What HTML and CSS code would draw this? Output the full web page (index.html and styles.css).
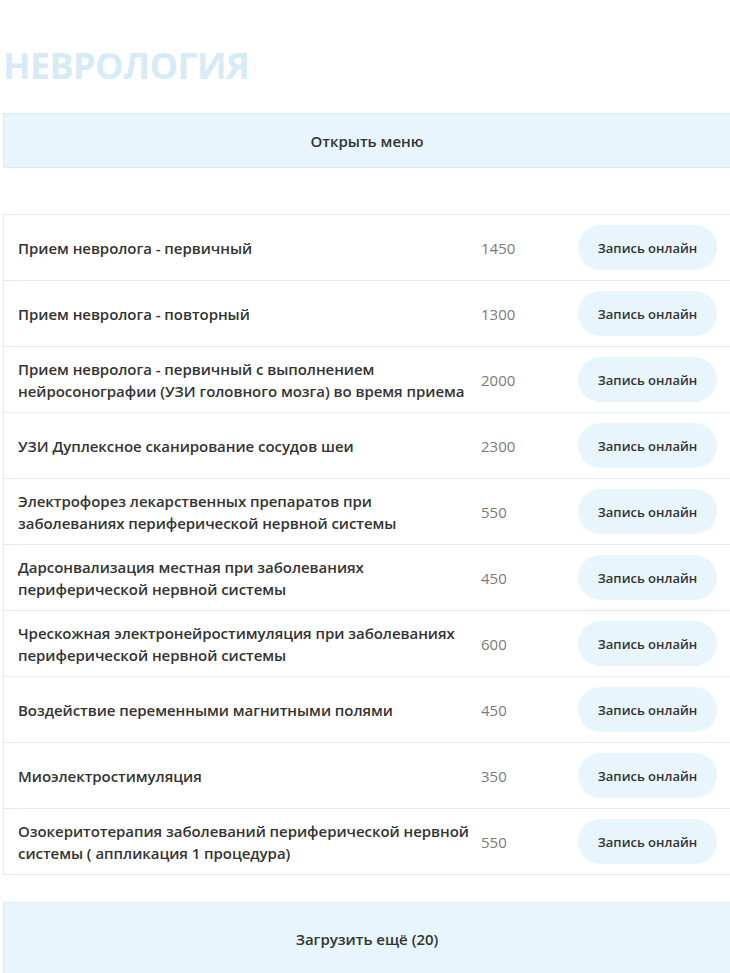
FILE: index.html
```html
<!DOCTYPE html>
<html lang="ru">
<head>
<meta charset="utf-8">
<link rel="stylesheet" href="styles.css">
</head>
<body>
<div class="page">
  <h1 class="title">НЕВРОЛОГИЯ</h1>
  <div class="menu-btn">Открыть меню</div>
  <div class="table">
    <div class="row"><div class="name">Прием невролога - первичный</div><div class="price">1450</div><div class="cell-btn"><span class="btn">Запись онлайн</span></div></div>
    <div class="row"><div class="name">Прием невролога - повторный</div><div class="price">1300</div><div class="cell-btn"><span class="btn">Запись онлайн</span></div></div>
    <div class="row"><div class="name">Прием невролога - первичный с выполнением нейросонографии (УЗИ головного мозга) во время приема</div><div class="price">2000</div><div class="cell-btn"><span class="btn">Запись онлайн</span></div></div>
    <div class="row"><div class="name">УЗИ Дуплексное сканирование сосудов шеи</div><div class="price">2300</div><div class="cell-btn"><span class="btn">Запись онлайн</span></div></div>
    <div class="row"><div class="name">Электрофорез лекарственных препаратов при заболеваниях периферической нервной системы</div><div class="price">550</div><div class="cell-btn"><span class="btn">Запись онлайн</span></div></div>
    <div class="row"><div class="name">Дарсонвализация местная при заболеваниях периферической нервной системы</div><div class="price">450</div><div class="cell-btn"><span class="btn">Запись онлайн</span></div></div>
    <div class="row"><div class="name">Чрескожная электронейростимуляция при заболеваниях периферической нервной системы</div><div class="price">600</div><div class="cell-btn"><span class="btn">Запись онлайн</span></div></div>
    <div class="row"><div class="name">Воздействие переменными магнитными полями</div><div class="price">450</div><div class="cell-btn"><span class="btn">Запись онлайн</span></div></div>
    <div class="row"><div class="name">Миоэлектростимуляция</div><div class="price">350</div><div class="cell-btn"><span class="btn">Запись онлайн</span></div></div>
    <div class="row"><div class="name">Озокеритотерапия заболеваний периферической нервной системы ( аппликация 1 процедура)</div><div class="price">550</div><div class="cell-btn"><span class="btn">Запись онлайн</span></div></div>
  </div>
  <div class="more-btn">Загрузить ещё (20)</div>
</div>
</body>
</html>
```
FILE: styles.css
```css
html, body {
  margin: 0;
  padding: 0;
  background: #fff;
  overflow: hidden;
}
body {
  font-family: "Open Sans", "Liberation Sans", sans-serif;
  color: #333;
}
.page {
  width: 728px;
  margin-left: 3px;
  padding-top: 1px;
}
.title {
  margin: 39px 0 0 0;
  font-size: 36px;
  line-height: 52px;
  font-weight: 700;
  color: #d6ebf6;
  letter-spacing: -0.6px;
}
.menu-btn {
  margin-top: 21px;
  height: 53px;
  border: 1px solid #dcecf4;
  background: #e8f5fc;
  display: flex;
  align-items: center;
  justify-content: center;
  font-size: 15px;
  font-weight: 600;
  color: #333;
}
.table {
  margin-top: 46px;
  border: 1px solid #deedf4;
  border-bottom: none;
}
.row {
  display: grid;
  grid-template-columns: 463px 97px 139px;
  align-items: center;
  height: 65px;
  padding-left: 14px;
  border-bottom: 1px solid #deedf4;
}
.name {
  font-size: 15px;
  line-height: 22px;
  font-weight: 600;
  color: #333;
  padding-right: 8px;
  letter-spacing: -0.05px;
}
.price {
  font-size: 15px;
  color: #7a7a7a;
}
.btn {
  display: flex;
  align-items: center;
  justify-content: center;
  height: 45px;
  border-radius: 23px;
  background: #e8f5fc;
  font-size: 13px;
  font-weight: 600;
  color: #333;
}
.more-btn {
  margin-top: 27px;
  height: 72px;
  border: 1px solid #dcecf4;
  background: #e8f5fc;
  display: flex;
  align-items: center;
  justify-content: center;
  font-size: 15px;
  font-weight: 600;
  color: #333;
}
```
